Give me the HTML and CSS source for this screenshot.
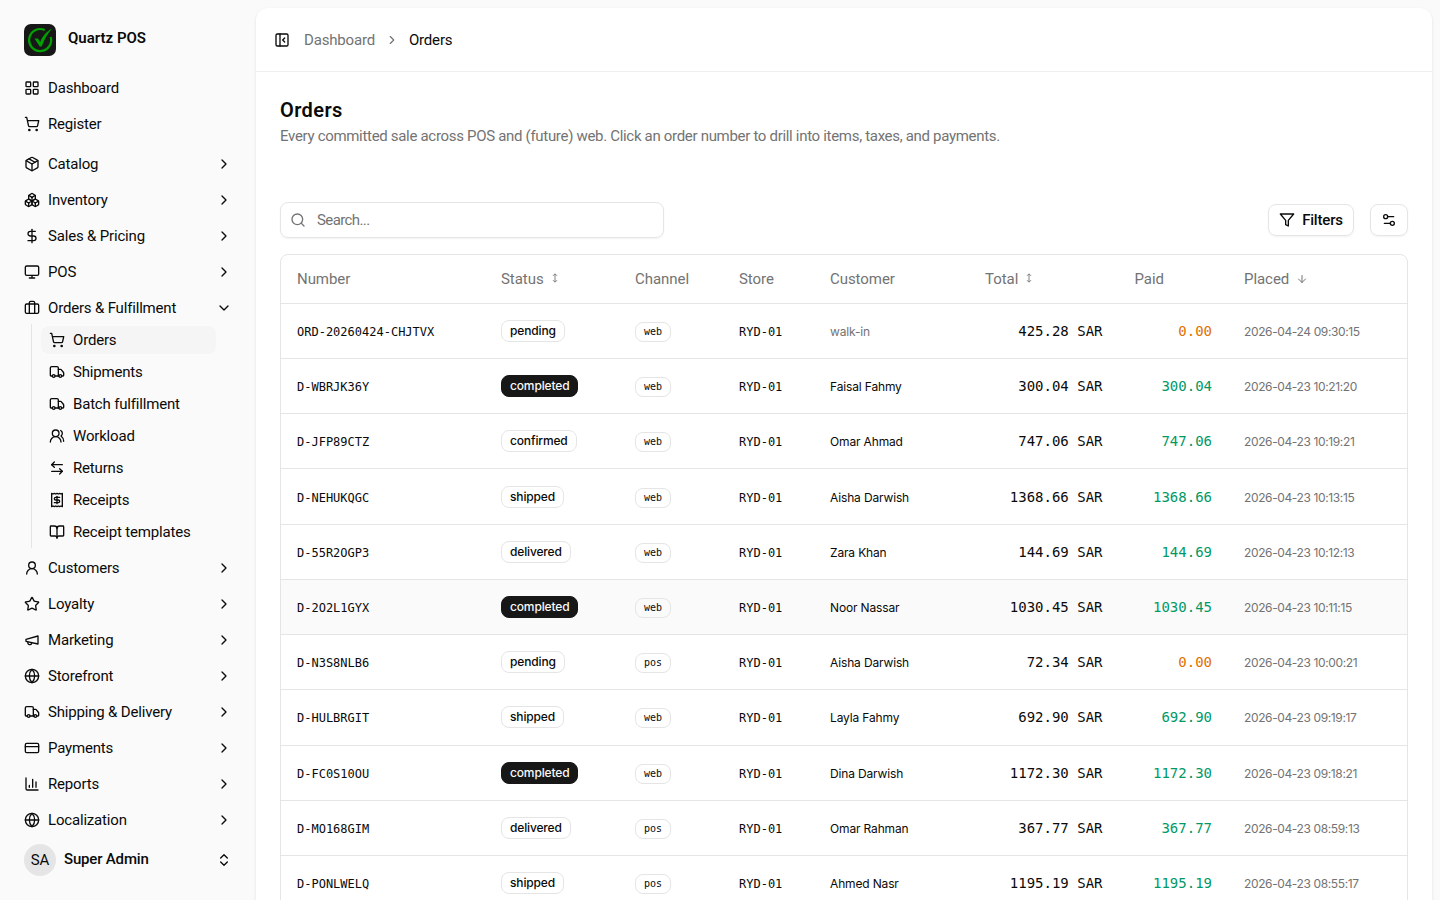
FILE: index.html
```html
<!DOCTYPE html>
<html lang="en">
<head>
<meta charset="UTF-8">
<title>Orders - Quartz POS</title>
<link rel="stylesheet" href="styles.css">
</head>
<body>
<!-- icon sprite -->
<svg class="sprite" width="0" height="0">
    <symbol id="grid" viewBox="0 0 24 24"><rect x="3" y="3" width="7" height="7" rx="1"/><rect x="14" y="3" width="7" height="7" rx="1"/><rect x="14" y="14" width="7" height="7" rx="1"/><rect x="3" y="14" width="7" height="7" rx="1"/></symbol>
    <symbol id="cart" viewBox="0 0 24 24"><circle cx="8" cy="21" r="1"/><circle cx="19" cy="21" r="1"/><path d="M2.05 2.05h2l2.66 12.42a2 2 0 0 0 2 1.58h9.78a2 2 0 0 0 1.95-1.57l1.65-7.43H5.12"/></symbol>
    <symbol id="package" viewBox="0 0 24 24"><path d="M11 21.73a2 2 0 0 0 2 0l7-4A2 2 0 0 0 21 16V8a2 2 0 0 0-1-1.73l-7-4a2 2 0 0 0-2 0l-7 4A2 2 0 0 0 3 8v8a2 2 0 0 0 1 1.73z"/><path d="M12 22V12"/><path d="M3.29 7 12 12l8.71-5"/><path d="m7.5 4.27 9 5.15"/></symbol>
    <symbol id="boxes" viewBox="0 0 24 24"><path d="M2.97 12.92A2 2 0 0 0 2 14.63v3.24a2 2 0 0 0 .97 1.71l3 1.8a2 2 0 0 0 2.06 0L12 19v-5.5l-5-3-4.03 2.42Z"/><path d="m7 16.5-4.74-2.85"/><path d="m7 16.5 5-3"/><path d="M7 16.5v5.17"/><path d="M12 13.5V19l3.97 2.38a2 2 0 0 0 2.06 0l3-1.8a2 2 0 0 0 .97-1.71v-3.24a2 2 0 0 0-.97-1.71L17 10.5l-5 3Z"/><path d="m17 16.5-5-3"/><path d="m17 16.5 4.74-2.85"/><path d="M17 16.5v5.17"/><path d="M7.97 4.42A2 2 0 0 0 7 6.13v4.37l5 3 5-3V6.13a2 2 0 0 0-.97-1.71l-3-1.8a2 2 0 0 0-2.06 0l-3 1.8Z"/><path d="M12 8 7.26 5.15"/><path d="m12 8 4.74-2.85"/><path d="M12 13.5V8"/></symbol>
    <symbol id="dollar" viewBox="0 0 24 24"><path d="M12 2v20"/><path d="M17 5H9.5a3.5 3.5 0 0 0 0 7h5a3.5 3.5 0 0 1 0 7H6"/></symbol>
    <symbol id="monitor" viewBox="0 0 24 24"><rect x="2" y="3" width="20" height="14" rx="2"/><path d="M8 21h8M12 17v4"/></symbol>
    <symbol id="briefcase" viewBox="0 0 24 24"><path d="M16 20V4a2 2 0 0 0-2-2h-4a2 2 0 0 0-2 2v16"/><rect x="2" y="6" width="20" height="14" rx="2"/></symbol>
    <symbol id="truck" viewBox="0 0 24 24"><path d="M14 18V6a2 2 0 0 0-2-2H4a2 2 0 0 0-2 2v11a1 1 0 0 0 1 1h2"/><path d="M15 18H9"/><path d="M19 18h2a1 1 0 0 0 1-1v-3.65a1 1 0 0 0-.22-.624l-3.48-4.35A1 1 0 0 0 17.52 8H14"/><circle cx="17" cy="18" r="2"/><circle cx="7" cy="18" r="2"/></symbol>
    <symbol id="users" viewBox="0 0 24 24"><path d="M18 21a8 8 0 0 0-16 0"/><circle cx="10" cy="8" r="5"/><path d="M22 20c0-3.37-2-6.5-4-8a5 5 0 0 0-.45-8.3"/></symbol>
    <symbol id="user" viewBox="0 0 24 24"><circle cx="12" cy="8" r="5"/><path d="M20 21a8 8 0 0 0-16 0"/></symbol>
    <symbol id="swap" viewBox="0 0 24 24"><path d="M8 3 4 7l4 4"/><path d="M4 7h16"/><path d="m16 21 4-4-4-4"/><path d="M20 17H4"/></symbol>
    <symbol id="receipt" viewBox="0 0 24 24"><path d="M4 2v20l2-1 2 1 2-1 2 1 2-1 2 1 2-1 2 1V2l-2 1-2-1-2 1-2-1-2 1-2-1-2 1Z"/><path d="M16 8h-6a2 2 0 1 0 0 4h4a2 2 0 1 1 0 4H8"/><path d="M12 17.5v-11"/></symbol>
    <symbol id="book" viewBox="0 0 24 24"><path d="M12 7v14"/><path d="M3 18a1 1 0 0 1-1-1V4a1 1 0 0 1 1-1h5a4 4 0 0 1 4 4 4 4 0 0 1 4-4h5a1 1 0 0 1 1 1v13a1 1 0 0 1-1 1h-6a3 3 0 0 0-3 3 3 3 0 0 0-3-3z"/></symbol>
    <symbol id="star" viewBox="0 0 24 24"><path d="M11.525 2.295a.53.53 0 0 1 .95 0l2.31 4.679a2.123 2.123 0 0 0 1.595 1.16l5.166.756a.53.53 0 0 1 .294.904l-3.736 3.638a2.123 2.123 0 0 0-.611 1.878l.882 5.14a.53.53 0 0 1-.771.56l-4.618-2.428a2.122 2.122 0 0 0-1.973 0L6.396 21.01a.53.53 0 0 1-.77-.56l.881-5.139a2.122 2.122 0 0 0-.611-1.879L2.16 9.795a.53.53 0 0 1 .294-.906l5.165-.755a2.122 2.122 0 0 0 1.597-1.16z"/></symbol>
    <symbol id="megaphone" viewBox="0 0 24 24"><path d="m3 11 18-5v12L3 14v-3z"/><path d="M11.6 16.8a3 3 0 1 1-5.8-1.6"/></symbol>
    <symbol id="globe" viewBox="0 0 24 24"><circle cx="12" cy="12" r="10"/><path d="M12 2a14.5 14.5 0 0 0 0 20 14.5 14.5 0 0 0 0-20"/><path d="M2 12h20"/></symbol>
    <symbol id="card" viewBox="0 0 24 24"><rect x="2" y="5" width="20" height="14" rx="2"/><path d="M2 10h20"/></symbol>
    <symbol id="chart" viewBox="0 0 24 24"><path d="M3 3v16a2 2 0 0 0 2 2h16"/><path d="M18 17V9M13 17V5M8 17v-3"/></symbol>
    <symbol id="right" viewBox="0 0 24 24"><path d="m9 18 6-6-6-6"/></symbol>
    <symbol id="down" viewBox="0 0 24 24"><path d="m6 9 6 6 6-6"/></symbol>
    <symbol id="updown" viewBox="0 0 24 24"><path d="m7 15 5 5 5-5M7 9l5-5 5 5"/></symbol>
    <symbol id="panel" viewBox="0 0 24 24"><rect x="3" y="3" width="18" height="18" rx="2"/><path d="M9 3v18M16 15l-3-3 3-3"/></symbol>
    <symbol id="search" viewBox="0 0 24 24"><circle cx="11" cy="11" r="8"/><path d="m21 21-4.3-4.3"/></symbol>
    <symbol id="funnel" viewBox="0 0 24 24"><path d="M22 3H2l8 9.46V19l4 2v-8.54L22 3z"/></symbol>
    <symbol id="sliders" viewBox="0 0 24 24"><path d="M14 17H5M19 7h-9"/><circle cx="17" cy="17" r="3"/><circle cx="7" cy="7" r="3"/></symbol>
    <symbol id="arrow" viewBox="0 0 24 24"><path d="M12 5v14M19 12l-7 7-7-7"/></symbol>
    <symbol id="sort" viewBox="0 0 6 10"><path d="M3 1v8M1 2.8l2-2 2 2M1 7.2l2 2 2-2"/></symbol>
</svg>

<div class="layout">
    <aside class="sidebar">
        <div class="brand">
            <svg class="logo" viewBox="0 0 32 32"><rect width="32" height="32" rx="7" fill="#171717"/><path d="M20.8 6.1A11 11 0 1 0 26.700 13" fill="none" stroke="#00a000" stroke-width="2.2"/><path d="M10.500 14.600h3.500l2.200 3.400C18.300 12.800 22 8 28 4.600c-4 4.500-7.500 10.500-10.300 17.900h-2z" fill="#00a000"/></svg>
            <span>Quartz POS</span>
        </div>
        <nav id="nav"></nav>
        <div class="user">
            <span class="avatar">SA</span>
            <span class="name">Super Admin</span>
            <svg class="icon"><use href="#updown"/></svg>
        </div>
    </aside>

    <main class="main">
        <header class="topbar">
            <svg class="icon"><use href="#panel"/></svg>
            <span class="crumb">Dashboard</span>
            <svg class="icon sep"><use href="#right"/></svg>
            <span class="current">Orders</span>
        </header>
        <section class="content">
            <h1>Orders</h1>
            <p class="desc">Every committed sale across POS and (future) web. Click an order number to drill into items, taxes, and payments.</p>
            <div class="toolbar">
                <div class="search"><svg class="icon"><use href="#search"/></svg><span>Search...</span></div>
                <div class="btn filters"><svg class="icon"><use href="#funnel"/></svg><span>Filters</span></div>
                <div class="btn view"><svg class="icon"><use href="#sliders"/></svg></div>
            </div>
            <div class="table" id="orders">
                <div class="row head">
                    <div>Number</div>
                    <div>Status<svg class="sort"><use href="#sort"/></svg></div>
                    <div>Channel</div>
                    <div>Store</div>
                    <div>Customer</div>
                    <div>Total<svg class="sort"><use href="#sort"/></svg></div>
                    <div>Paid</div>
                    <div>Placed<svg class="arrow"><use href="#arrow"/></svg></div>
                </div>
            </div>
        </section>
    </main>
</div>
<script src="script.js"></script>
</body>
</html>
```
FILE: styles.css
```css
*{box-sizing:border-box;}
body{margin:0; height:900px; overflow:hidden; background:#fafafa; color:#0a0a0a; font:15px/20px Roboto, "Liberation Sans", sans-serif; letter-spacing:-.18px;}
.sprite{display:block; position:absolute;}
.icon{width:16px; height:16px; flex:none; fill:none; stroke:currentColor; stroke-width:2; stroke-linecap:round; stroke-linejoin:round;}
.layout{display:flex; height:900px;}

/* sidebar */
.sidebar{width:256px; flex:none; padding:24px 16px 0;}
.brand{display:flex; gap:12px; padding:0 8px; height:48px; font-weight:600; line-height:28px; letter-spacing:0;}
.logo{width:32px; height:32px;}
.item{display:flex; align-items:center; gap:8px; height:32px; padding:0 8px; margin-bottom:4px;}
.item span{flex:1;}
.item.last{margin-bottom:8px;}
.item.open{margin-bottom:0;}
.sub{margin:0 24px 4px 15px; padding:2px 0 2px 9px; border-left:1px solid #e5e5e5;}
.sub .item{height:28px; border-radius:8px;}
.sub .item:last-child{margin-bottom:0;}
.sub .active{background:#f5f5f5;}
.user{display:flex; align-items:center; gap:8px; height:32px; margin-top:8px; padding:0 8px;}
.avatar{width:32px; height:32px; border-radius:50%; background:#e5e5e5; text-align:center; line-height:32px;}
.name{flex:1; font-weight:500; position:relative; top:-1px;}

/* page */
.main{flex:1; margin:8px 8px 0 0; background:#fff; border-radius:12px 12px 0 0; box-shadow:0 1px 3px rgba(0,0,0,.1), 0 1px 2px -1px rgba(0,0,0,.1);}
.topbar{display:flex; align-items:center; height:64px; padding:0 18px; border-bottom:1px solid #f0f0f0;}
.crumb{margin-left:14px; color:#737373;}
.sep{width:14px; height:14px; margin:0 10px; color:#737373;}
.content{padding:24px;}
h1{margin:0; font-size:20px; line-height:28px; font-weight:600; letter-spacing:.4px;}
.desc{margin:2px 0 0; line-height:20px; color:#737373; letter-spacing:-.31px;}
.toolbar{display:flex; align-items:center; margin-top:56px; height:36px;}
.search{display:flex; align-items:center; gap:11px; width:384px; height:36px; margin-right:auto; padding:0 9px; border:1px solid #e5e5e5; border-radius:8px; color:#737373; letter-spacing:-.6px; box-shadow:0 1px 2px rgba(0,0,0,.05);}
.btn{display:flex; align-items:center; justify-content:center; gap:7px; height:32px; border:1px solid #e5e5e5; border-radius:8px; font-weight:500; box-shadow:0 1px 2px rgba(0,0,0,.05);}
.filters{width:86px;}
.view{width:38px; margin-left:16px;}

/* orders table */
.table{margin-top:16px; border:1px solid #e5e5e5; border-radius:8px; overflow:hidden;}
.row{display:grid; grid-template-columns:204px 134px 104px 91px 155px 149.5px 109.5px 1fr; align-items:center; height:55.22px; border-bottom:1px solid #e5e5e5; font:12px/16px Inter, sans-serif; letter-spacing:-.15px;}
.row > div{padding:0 16px; white-space:nowrap;}
.head{height:48.8px; font:450 15px/20px Roboto, sans-serif; letter-spacing:-.05px; color:#737373;}
.hover{background:#fafafa;}
.row > .low{padding-top:2px;}
.mono{font-family:"DejaVu Sans Mono", monospace; letter-spacing:0;}
.num{font-size:14px; text-align:right;}
.muted{color:#737373;}
.date{letter-spacing:-.38px;}
.paid{color:#009966;}
.unpaid{color:#e17100;}
.badge{display:inline-block; height:22px; padding:0 8px; border:1px solid #e5e5e5; border-radius:8px; font-weight:500; line-height:20px;}
.badge.completed{background:#171717; border-color:#171717; color:#fafafa;}
.channel{height:20px; font:10px/17px "DejaVu Sans Mono", monospace; letter-spacing:0; vertical-align:middle;}
.sort{width:6px; height:10px; margin-left:8px; fill:none; stroke:currentColor; stroke-width:.9; vertical-align:1px;}
.arrow{width:12px; height:12px; margin-left:7px; fill:none; stroke:currentColor; stroke-width:2; stroke-linecap:round; stroke-linejoin:round; vertical-align:-1px;}
```
FILE: script.js
```js
var menu = [
    ['grid', 'Dashboard'], ['cart', 'Register'],
    ['package', 'Catalog', 'right'], ['boxes', 'Inventory', 'right'], ['dollar', 'Sales & Pricing', 'right'],
    ['monitor', 'POS', 'right'], ['briefcase', 'Orders & Fulfillment', 'down'],
    ['user', 'Customers', 'right'], ['star', 'Loyalty', 'right'], ['megaphone', 'Marketing', 'right'],
    ['globe', 'Storefront', 'right'], ['truck', 'Shipping & Delivery', 'right'], ['card', 'Payments', 'right'],
    ['chart', 'Reports', 'right'], ['globe', 'Localization', 'right']
];
var submenu = [
    ['cart', 'Orders'], ['truck', 'Shipments'], ['truck', 'Batch fulfillment'], ['users', 'Workload'],
    ['swap', 'Returns'], ['receipt', 'Receipts'], ['book', 'Receipt templates']
];
var orders = [
    ['ORD-20260424-CHJTVX', 'pending', 'web', 'walk-in', '425.28', '0.00', '2026-04-24 09:30:15'],
    ['D-WBRJK36Y', 'completed', 'web', 'Faisal Fahmy', '300.04', '300.04', '2026-04-23 10:21:20'],
    ['D-JFP89CTZ', 'confirmed', 'web', 'Omar Ahmad', '747.06', '747.06', '2026-04-23 10:19:21'],
    ['D-NEHUKQGC', 'shipped', 'web', 'Aisha Darwish', '1368.66', '1368.66', '2026-04-23 10:13:15'],
    ['D-55R2OGP3', 'delivered', 'web', 'Zara Khan', '144.69', '144.69', '2026-04-23 10:12:13'],
    ['D-2O2L1GYX', 'completed', 'web', 'Noor Nassar', '1030.45', '1030.45', '2026-04-23 10:11:15'],
    ['D-N3S8NLB6', 'pending', 'pos', 'Aisha Darwish', '72.34', '0.00', '2026-04-23 10:00:21'],
    ['D-HULBRGIT', 'shipped', 'web', 'Layla Fahmy', '692.90', '692.90', '2026-04-23 09:19:17'],
    ['D-FC0S10OU', 'completed', 'web', 'Dina Darwish', '1172.30', '1172.30', '2026-04-23 09:18:21'],
    ['D-MO168GIM', 'delivered', 'pos', 'Omar Rahman', '367.77', '367.77', '2026-04-23 08:59:13'],
    ['D-PONLWELQ', 'shipped', 'pos', 'Ahmed Nasr', '1195.19', '1195.19', '2026-04-23 08:55:17']
];

function icon(name){
    return '<svg class="icon"><use href="#' + name + '"/></svg>';
}
function item(m, cls){
    return '<div class="item ' + cls + '">' + icon(m[0]) + '<span>' + m[1].replace('&', '&amp;') + '</span>' + (m[2] ? icon(m[2]) : '') + '</div>';
}

var nav = '';
for(var i=0; i<menu.length; i++){
    var open = menu[i][2] == 'down';
    nav += item(menu[i], i == 1 ? 'last' : open ? 'open' : '');
    if(open){
        nav += '<div class="sub">';
        for(var j=0; j<submenu.length; j++)
            nav += item(submenu[j], j == 0 ? 'active' : '');
        nav += '</div>';
    }
}
document.getElementById('nav').innerHTML = nav;

var rows = '';
for(var i=0; i<orders.length; i++){
    var o = orders[i];
    rows += '<div class="row' + (i == 5 ? ' hover' : '') + '">'
        + '<div class="mono low">' + o[0] + '</div>'
        + '<div><span class="badge ' + o[1] + '">' + o[1] + '</span></div>'
        + '<div class="low"><span class="badge channel">' + o[2] + '</span></div>'
        + '<div class="mono low">RYD-01</div>'
        + '<div class="low' + (o[3] == 'walk-in' ? ' muted' : '') + '">' + o[3] + '</div>'
        + '<div class="mono num">' + o[4] + ' SAR</div>'
        + '<div class="mono num ' + (o[5] == '0.00' ? 'unpaid' : 'paid') + '">' + o[5] + '</div>'
        + '<div class="muted low date">' + o[6] + '</div></div>';
}
document.getElementById('orders').innerHTML += rows;
```
